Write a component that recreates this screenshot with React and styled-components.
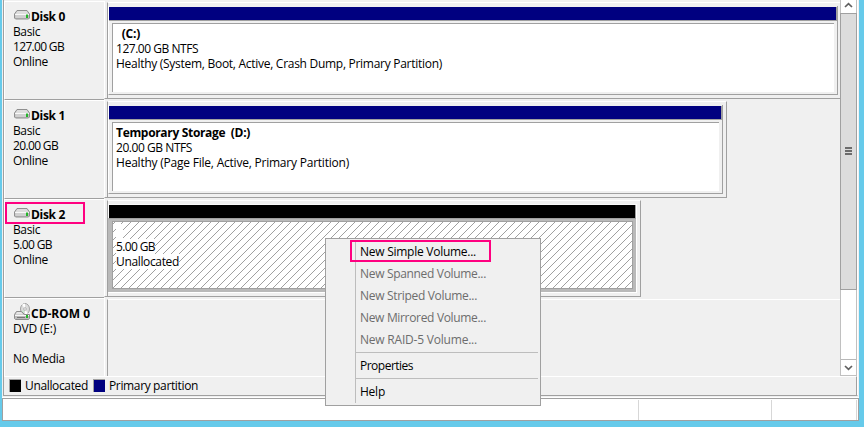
import React, { useLayoutEffect, useRef, useState } from "react";
import styled, { createGlobalStyle, css } from "styled-components";

const Global = createGlobalStyle`
  * { box-sizing: border-box; }
  html, body { margin: 0; padding: 0; overflow: hidden; }
  body { font-family: "Open Sans", "Noto Sans", sans-serif; font-size: 12px; line-height: 15px; color: #000; }
  svg { display: block; }
`;

const line = "#a0a0a0";
const face = "#f0f0f0";

const Label = styled.span`
  display: block;
  width: max-content;
  white-space: pre;
  font-weight: ${(p) => (p.$bold ? 700 : 400)};
`;

/* Text whose tracking is adjusted so that it fills a given width. */
function Text({ w, bold, children }) {
  const ref = useRef(null);
  const [gap, setGap] = useState(0);
  useLayoutEffect(() => {
    const natural = ref.current.getBoundingClientRect().width;
    setGap((w - natural) / children.length);
  }, [w, children]);
  return (
    <Label ref={ref} $bold={bold} style={{ letterSpacing: gap }}>
      {children}
    </Label>
  );
}

const Screen = styled.div`
  position: relative;
  width: 864px;
  height: 427px;
  overflow: hidden;
  background: #66caea;
  padding-left: 2px;
`;
const Window = styled.main`
  width: 857px;
  height: 421px;
  background: ${face};
  display: flex;
  flex-direction: column;
`;
const Panel = styled.section`
  height: 396px;
  width: 855px;
  margin-left: 1px;
  border: solid ${line};
  border-width: 0 0 1px 1px;
  border-right: 1px solid #fff;
  display: flex;
  flex-direction: column;
`;
const Body = styled.div`
  display: flex;
  height: 376px;
`;
const Disks = styled.div`
  width: 836px;
  height: 376px;
  padding-top: 1px;
  overflow: hidden;
`;
const DiskRow = styled.div`
  display: flex;
  height: 99px;
`;
const DiskInfo = styled.div`
  width: 100px;
  height: 99px;
  border: solid #fff;
  border-width: 1px 0 0 1px;
  border-bottom: ${(p) => (p.$last ? "0" : `1px solid ${line}`)};
  padding: 7px 0 0 8px;
`;
const Gutter = styled.div`
  width: 3px;
  height: 98px;
  border-left: 1px solid #fff;
  border-bottom: ${(p) => (p.$last ? "0" : `1px solid ${line}`)};
`;
const InfoName = styled.div`
  display: flex;
  height: 15px;
  gap: 1px;
  padding-left: 1px;
`;
const Line = styled.div`
  height: 15px;
`;
const Track = styled.div`
  width: ${(p) => p.$w}px;
  height: 97px;
  margin-top: 1px;
  border-left: 1px solid ${line};
  border-top: 1px solid #fff;
  border-bottom: ${(p) => (p.$last ? "0" : `1px solid ${line}`)};
  border-right: ${(p) => (p.$open ? "0" : `1px solid ${line}`)};
  padding: 3px 0 0 0;
`;
const Volume = styled.div`
  width: ${(p) => p.$w}px;
  height: 89px;
  padding-top: 1px;
  border: 1px solid ${line};
  border-width: 0 1px 1px 0;
  border-left: 1px solid #fff;
  ${(p) =>
    p.$selected &&
    css`
      background: linear-gradient(#fafafa 14px, #b9b9b9 0) border-box;
      border-color: #fff;
      border-left-color: transparent;
    `}
`;
const Bar = styled.div`
  height: 14px;
  background: ${(p) => p.$color};
  border-bottom: 1px solid ${line};
  border-right: 1px solid ${line};
`;
const VolumeBox = styled.div`
  position: relative;
  height: ${(p) => (p.$hatched ? 68 : 69)}px;
  margin: 2px 3px 0 3px;
  background: #fff;
  border: solid ${line};
  border-width: ${(p) => (p.$hatched ? "1px" : "1px 0 0 1px")};
  padding: 2px 0 0 3px;
`;
const HatchLayer = styled.svg`
  position: absolute;
  inset: 0;
  width: 100%;
  height: 100%;
`;
const Plate = styled.div`
  position: relative;
  width: max-content;
  min-width: 7px;
  background: #fff;
  height: 15px;
`;
const Scrollbar = styled.div`
  width: 17px;
  height: 376px;
  display: flex;
  flex-direction: column;
  background: #fff;
  border: 1px solid #c0c0c0;
  border-top: 0;
`;
const ScrollButton = styled.div`
  height: ${(p) => p.$h}px;
  display: flex;
  justify-content: center;
  padding-top: ${(p) => p.$top}px;
  border-top: ${(p) => (p.$down ? "1px solid #b8b8b8" : "0")};
`;
const Thumb = styled.div`
  height: 277px;
  margin: 0 -1px;
  background: #dcdcdc;
  border: 1px solid ${line};
  display: flex;
  flex-direction: column;
  align-items: center;
  padding-top: 133px;
  gap: 1px;
`;
const Grip = styled.i`
  width: 7px;
  height: 2px;
  background: #6c6c6c;
`;
const Space = styled.div`
  flex: 1;
`;
const Legend = styled.footer`
  height: 19px;
  border-top: 1px solid #fff;
  border-right: 1px solid ${line};
  display: flex;
  padding: 1px 0 0 5px;
`;
const Swatch = styled.i`
  width: 12px;
  height: 13px;
  margin: 1px 4px 0 0;
  border: solid ${line};
  border-width: 1px 0 0 1px;
  background: ${(p) => p.$color};
`;
const LegendItem = styled.div`
  display: flex;
  width: ${(p) => p.$w}px;
`;
const StatusBar = styled.div`
  height: 23px;
  margin-top: 2px;
  background: #fff;
  border: 1px solid ${line};
  box-shadow: 0 -1px #fff;
  display: flex;
  padding-top: 1px;
`;
const StatusCell = styled.div`
  width: ${(p) => p.$w}px;
  border-right: 1px solid #d7d7d7;
`;
const Menu = styled.nav`
  position: absolute;
  left: 325px;
  top: 238px;
  width: 216px;
  height: 168px;
  padding: 2px;
  border: 1px solid ${line};
  background: ${face};
`;
const MenuInner = styled.div`
  height: 162px;
  margin-left: 27px;
  border-left: 1px solid #bdbdbd;
`;
const MenuItem = styled.div`
  height: 22px;
  padding: 3px 0 0 4px;
  color: ${(p) => (p.$disabled ? "#6d6d6d" : "#000")};
`;
const Separator = styled.div`
  height: 4px;
  padding-top: 1px;
  &::after {
    content: "";
    display: block;
    height: 1px;
    background: #bdbdbd;
  }
`;
const Highlight = styled.div`
  position: absolute;
  left: ${(p) => p.$x}px;
  top: ${(p) => p.$y}px;
  width: ${(p) => p.$w}px;
  height: 22px;
  border: 2px solid #ff0080;
`;

function DriveIcon() {
  return (
    <svg width="16" height="15" viewBox="0 -1 16 15">
      <path d="M3 .5h10l2.5 3.5v4l-1 1h-13l-1-1V4z" fill="#bdbdbd" stroke="#8f8f8f" />
      <path d="M3.4 1h9.2l2 3H1.4z" fill="#dedede" />
      <path d="M1 4h14v1H1z" fill="#f8f8f8" />
      <path d="M1.5 5h11v3h-11z" fill="#d0d0d0" />
      <path d="M12 4.5h2V8h-2z" fill="#24b52a" />
    </svg>
  );
}
function DiscIcon() {
  return (
    <svg width="16" height="16" viewBox="0 0 16 16" overflow="visible">
      <ellipse cx="11" cy="3" rx="4.5" ry="5.5" fill="#dcdcdc" stroke="#a2a2a2" />
      <path d="M11 3 8-1.5l3-1zM11 3.5l3 4-3 1z" fill="#fff" />
      <path d="M11 3.5 7 5.5l2 3z" fill="#c8e4d0" />
      <circle cx="11" cy="3" r="1.3" fill="#fff" stroke="#999" strokeWidth=".7" />
      <g transform="translate(0 5)">
        <path d="M2.5.5h5l3 3h5v4l-1 1h-13l-1-1v-4z" fill="#bbb" stroke="#8d8d8d" />
        <path d="M3 1h4l2.5 2.5h-8z" fill="#e6e6e6" />
        <path d="M1 4h14v1H1z" fill="#f7f7f7" />
        <path d="M3 6h8v1H3z" fill="#777" />
        <path d="M12 4h2v3h-2z" fill="#24b52a" />
      </g>
    </svg>
  );
}
function Chevron({ down }) {
  return (
    <svg width="9" height="6" viewBox="0 0 9 6">
      <path d={down ? "M1 1l3.5 3.4L8 1" : "M1 5l3.5-3.4L8 5"} fill="none" stroke="#606060" strokeWidth="1.7" />
    </svg>
  );
}
function Hatch() {
  return (
    <HatchLayer shapeRendering="crispEdges">
      <defs>
        <pattern id="hatch" width="8" height="8" patternUnits="userSpaceOnUse">
          {[0, 1, 2, 3, 4, 5, 6, 7].map((y) => (
            <rect key={y} x={(9 - y) % 8} y={y} width="1" height="1" fill="#a0a0a0" />
          ))}
        </pattern>
      </defs>
      <rect width="100%" height="100%" fill="url(#hatch)" />
    </HatchLayer>
  );
}

function Info({ name, nameW, lines, disc, last }) {
  return (
    <>
      <DiskInfo $last={last}>
        <InfoName>
          {disc ? <DiscIcon /> : <DriveIcon />}
          <Text bold w={nameW}>{name}</Text>
        </InfoName>
        {lines.map(([t, w], i) => (
          <Line key={i}>{t && <Text w={w}>{t}</Text>}</Line>
        ))}
      </DiskInfo>
      <Gutter $last={last} />
    </>
  );
}

const items = [
  ["New Simple Volume...", 116, false],
  ["New Spanned Volume...", 126, true],
  ["New Striped Volume...", 117, true],
  ["New Mirrored Volume...", 126, true],
  ["New RAID-5 Volume...", 117, true],
];

export default function App() {
  return (
    <Screen>
      <Global />
      <Window>
        <Panel>
          <Body>
            <Disks>
              <DiskRow>
                <Info name="Disk 0" nameW={34} lines={[["Basic", 27], ["127.00 GB", 51], ["Online", 35]]} />
                <Track $w={733} $open>
                  <Volume $w={730}>
                    <Bar $color="#000080" />
                    <VolumeBox>
                      <Line><Text bold w={24}>{"  (C:)"}</Text></Line>
                      <Line><Text w={82}>127.00 GB NTFS</Text></Line>
                      <Line><Text w={326}>Healthy (System, Boot, Active, Crash Dump, Primary Partition)</Text></Line>
                    </VolumeBox>
                  </Volume>
                </Track>
              </DiskRow>
              <DiskRow>
                <Info name="Disk 1" nameW={34} lines={[["Basic", 27], ["20.00 GB", 45], ["Online", 35]]} />
                <Track $w={620}>
                  <Volume $w={615}>
                    <Bar $color="#000080" />
                    <VolumeBox>
                      <Line><Text bold w={134}>{"Temporary Storage  (D:)"}</Text></Line>
                      <Line><Text w={76}>20.00 GB NTFS</Text></Line>
                      <Line><Text w={233}>Healthy (Page File, Active, Primary Partition)</Text></Line>
                    </VolumeBox>
                  </Volume>
                </Track>
              </DiskRow>
              <DiskRow>
                <Info name="Disk 2" nameW={34} lines={[["Basic", 27], ["5.00 GB", 39], ["Online", 35]]} />
                <Track $w={534}>
                  <Volume $w={529} $selected>
                    <Bar $color="#000" />
                    <VolumeBox $hatched>
                      <Hatch />
                      <Plate />
                      <Plate><Text w={39}>5.00 GB</Text></Plate>
                      <Plate><Text w={63}>Unallocated</Text></Plate>
                    </VolumeBox>
                  </Volume>
                </Track>
              </DiskRow>
              <DiskRow>
                <Info disc last name="CD-ROM 0" nameW={59} lines={[["DVD (E:)", 43], ["", 0], ["No Media", 52]]} />
                <Track $w={733} $open $last />
              </DiskRow>
            </Disks>
            <Scrollbar>
              <ScrollButton $h={13} $top={2}><Chevron /></ScrollButton>
              <Thumb><Grip /><Grip /><Grip /></Thumb>
              <Space />
              <ScrollButton $down $h={16} $top={5}><Chevron down /></ScrollButton>
            </Scrollbar>
          </Body>
          <Legend>
            <LegendItem $w={84}><Swatch $color="#000" /><Text w={63}>Unallocated</Text></LegendItem>
            <LegendItem $w={120}><Swatch $color="#000080" /><Text w={89}>Primary partition</Text></LegendItem>
          </Legend>
        </Panel>
        <StatusBar>
          <StatusCell $w={636} />
          <StatusCell $w={133} />
          <StatusCell $w={85} />
        </StatusBar>
      </Window>
      <Menu>
        <MenuInner>
          {items.map(([t, w, off]) => (
            <MenuItem key={t} $disabled={off}><Text w={w}>{t}</Text></MenuItem>
          ))}
          <Separator />
          <MenuItem><Text w={53}>Properties</Text></MenuItem>
          <Separator />
          <MenuItem><Text w={25}>Help</Text></MenuItem>
        </MenuInner>
      </Menu>
      <Highlight $x={5} $y={202} $w={80} />
      <Highlight $x={350} $y={240} $w={141} />
    </Screen>
  );
}
